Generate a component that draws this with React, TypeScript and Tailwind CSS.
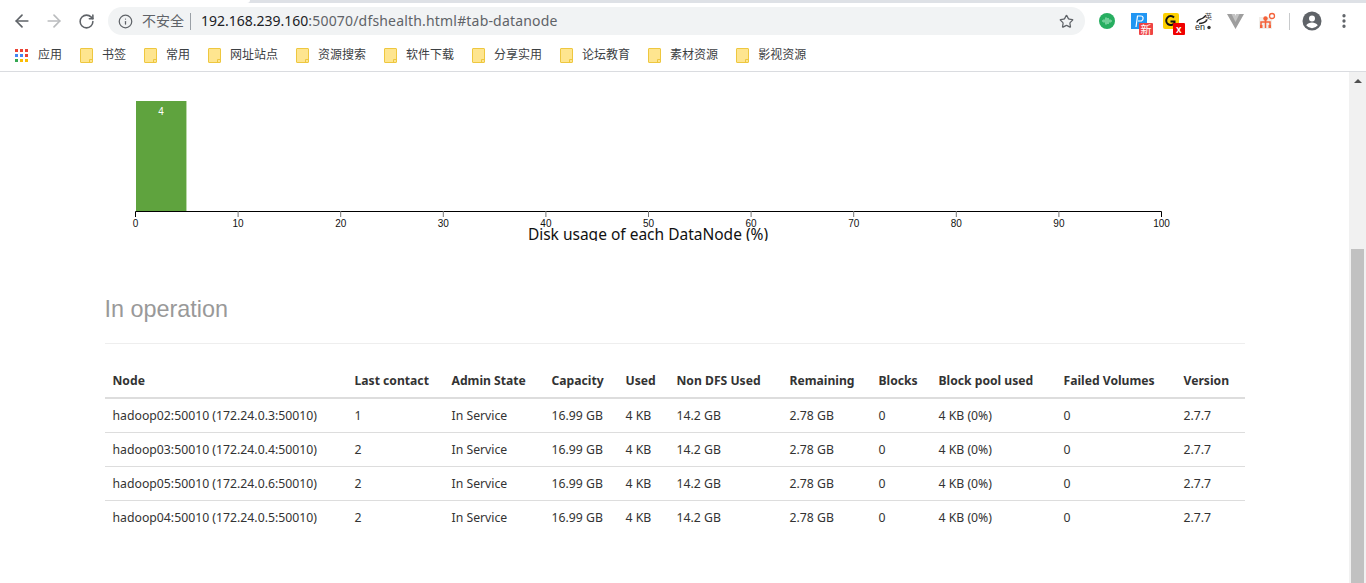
import React from "react";
import { ArrowLeft, ArrowRight, RotateCw, Info, Star, EllipsisVertical } from "lucide-react";

const bookmarks = ["书签", "常用", "网址站点", "资源搜索", "软件下载", "分享实用", "论坛教育", "素材资源", "影视资源"];

const columns = [
  { label: "Node", w: "w-[242px]" },
  { label: "Last contact", w: "w-[97px]" },
  { label: "Admin State", w: "w-[100px]" },
  { label: "Capacity", w: "w-[74px]" },
  { label: "Used", w: "w-[51px]" },
  { label: "Non DFS Used", w: "w-[113px]" },
  { label: "Remaining", w: "w-[89px]" },
  { label: "Blocks", w: "w-[60px]" },
  { label: "Block pool used", w: "w-[125px]" },
  { label: "Failed Volumes", w: "w-[120px]" },
  { label: "Version", w: "w-[69px]" },
];

const nodes = [
  ["hadoop02:50010 (172.24.0.3:50010)", "1"],
  ["hadoop03:50010 (172.24.0.4:50010)", "2"],
  ["hadoop05:50010 (172.24.0.6:50010)", "2"],
  ["hadoop04:50010 (172.24.0.5:50010)", "2"],
];

function FolderIcon() {
  return (
    <svg width="13" height="15" viewBox="0 0 13 15" className="shrink-0">
      <path d="M1 .5h11a.5.5 0 0 1 .5.5v13a.5.5 0 0 1-.5.5H1a.5.5 0 0 1-.5-.5V1A.5.5 0 0 1 1 .5z" fill="#fee58f" stroke="#eec73f" />
      <path d="M9.5 14.5v-3h3" fill="none" stroke="#eec73f" />
    </svg>
  );
}

function AppsIcon() {
  const colors = ["#ea4335", "#ea4335", "#ea4335", "#4285f4", "#4285f4", "#ea4335", "#34a853", "#fbbc05", "#fbbc05"];
  return (
    <div className="grid grid-cols-[repeat(3,3px)] gap-[2px] w-[13px] shrink-0">
      {colors.map((c, i) => (
        <svg key={i} width="3" height="3">
          <rect width="3" height="3" fill={c} />
        </svg>
      ))}
    </div>
  );
}

function ExtensionIcons() {
  return (
    <svg width="190" height="30" viewBox="1095 6 190 30" className="shrink-0">
      {/* green audio */}
      <circle cx="1107" cy="21" r="8" fill="#27ae60" />
      <path d="M1102 21h1M1104 19.500v3M1106 17.500v7M1108 18v6M1110 19.500v3M1112 21h-1" stroke="#a5e6bf" strokeWidth="1.200" fill="none" />
      {/* blue P */}
      <rect x="1131" y="13" width="16" height="16" fill="#2196f3" />
      <path d="M1136 27l1.500-11h3.500c2.500 0 3 3.500.5 5h-3.500" fill="none" stroke="#fff" strokeWidth="1.200" />
      <rect x="1139" y="23" width="14" height="12" rx="1" fill="#ef4444" />
      <text x="1140.500" y="33.500" fontSize="11" fill="#fff" fontFamily="Noto Sans CJK SC, sans-serif">新</text>
      {/* yellow G */}
      <rect x="1163" y="13" width="16" height="16" rx="2" fill="#fdd000" />
      <path d="M1174 17.500a4.500 4.500 0 1 0 .5 5.500M1170.500 21.500h4v2" fill="none" stroke="#111" strokeWidth="2" />
      <rect x="1173" y="23" width="12" height="12" rx="1" fill="#f00000" />
      <text x="1176" y="33" fontSize="10" fontWeight="700" fill="#fff" fontFamily="Liberation Sans, sans-serif">x</text>
      {/* en translate */}
      <path d="M1197 22.500c0-3 4-3 6-4.500 1.500-1 2-2 3-2.500M1199 23.500c3 0 6-1 8-3.500" fill="none" stroke="#222" strokeWidth="1.400" />
      <text x="1195" y="30" fontSize="9" fill="#222" fontFamily="Liberation Sans, sans-serif">en</text>
      <text x="1205" y="19" fontSize="7" fill="#444" fontFamily="Noto Sans CJK SC, sans-serif">英</text>
      <circle cx="1209" cy="27.500" r="1.700" fill="#333" />
      {/* grey V */}
      <path d="M1227 14h6l2.500 5 2.500-5h6l-8.500 15z" fill="#9e9e9e" />
      <path d="M1231.500 14h3.500l.5 2 .5-2h3.500l-4 8z" fill="#c4c4c4" />
      {/* orange org */}
      <rect x="1259" y="17" width="13" height="12" fill="#f1eeea" />
      <circle cx="1265.500" cy="18.500" r="2.200" fill="#f4623a" />
      <path d="M1261 25v-3h9v3M1265.500 20v8" stroke="#f4623a" strokeWidth="1.500" fill="none" />
      <rect x="1260" y="25" width="2.500" height="3" fill="#f4623a" />
      <rect x="1268.500" y="25" width="2.500" height="3" fill="#f4623a" />
      <circle cx="1272" cy="16" r="2.500" fill="#fff" stroke="#f4623a" strokeWidth="1.300" />
    </svg>
  );
}

function ProfileIcon() {
  return (
    <svg width="20" height="20" viewBox="0 0 20 20" className="shrink-0">
      <circle cx="10" cy="10" r="9.500" fill="#5f6368" />
      <circle cx="10" cy="7.500" r="3" fill="#fff" />
      <path d="M4.200 14.300c1.300-2 3.700-2.800 5.800-2.800s4.500.8 5.800 2.800a7.300 7.300 0 0 1-11.600 0z" fill="#fff" />
    </svg>
  );
}

function DiskChart() {
  const x0 = 30.5;
  const step = 102.6;
  const ticks = Array.from({ length: 11 }, (_, i) => i * 10);
  return (
    <svg width="1140" height="169" viewBox="0 0 1140 169" className="block overflow-hidden" fontFamily="Liberation Sans, Arial, sans-serif">
      <rect x="31" y="29" width="50" height="110" fill="#5fa33e" />
      <rect x="81" y="29" width="1" height="110" fill="#b9d8a8" />
      <text x="56" y="43" textAnchor="middle" fontSize="10" fill="#fff">4</text>
      <path d={`M${x0} 145V139.500H${x0 + step * 10}V145`} fill="none" stroke="#000" />
      {ticks.map((t, i) => (
        <g key={t}>
          {i > 0 && i < 10 && <line x1={x0 + i * step} x2={x0 + i * step} y1="139" y2="145" stroke="#777" />}
          <text x={x0 + i * step} y="155" textAnchor="middle" fontSize="10" fill="#111">{t}</text>
        </g>
      ))}
      <text x="543" y="168" textAnchor="middle" fontSize="15.500" fill="#111" fontFamily="Noto Sans, sans-serif">Disk usage of each DataNode (%)</text>
    </svg>
  );
}

export default function App() {
  return (
    <div className="h-[583px] w-[1366px] overflow-hidden flex flex-col bg-white font-['Noto_Sans','Noto_Sans_CJK_SC',sans-serif]">
      {/* Browser chrome */}
      <header className="shrink-0">
        <div className="h-[3px] bg-[#dee1e6]">
          <div className="h-[3px] w-[250px] bg-white rounded-br-md" />
        </div>
        <div className="h-[36px] flex items-center pl-[12px] pr-[12px]">
          <ArrowLeft size={20} color="#5f6368" strokeWidth={2} className="shrink-0" />
          <ArrowRight size={20} color="#babcbe" strokeWidth={2} className="shrink-0 ml-[12px]" />
          <RotateCw size={17} color="#5f6368" strokeWidth={2.2} className="shrink-0 ml-[14px]" />
          <div className="ml-[13px] h-[28px] w-[977px] rounded-full bg-[#f1f3f4] flex items-center pl-[10px] pr-[11px] shrink-0">
            <Info size={15} color="#5f6368" strokeWidth={2} className="shrink-0" />
            <span className="ml-[9px] text-[14px] leading-none text-[#5f6368]">不安全</span>
            <span className="ml-[6px] h-[17px] w-px bg-[#9aa0a6]" />
            <span className="ml-[10px] text-[14px] leading-none text-[#5f6368]">
              <span className="text-[#202124]">192.168.239.160</span>
              <span className="tracking-[0.18px]">:50070/dfshealth.html#tab-datanode</span>
            </span>
            <Star size={15} color="#5f6368" strokeWidth={2} className="ml-auto shrink-0" />
          </div>
          <div className="ml-[10px] shrink-0"><ExtensionIcons /></div>
          <span className="h-[17px] w-px bg-[#c8cacc] shrink-0 ml-[4px]" />
          <div className="ml-[12px]"><ProfileIcon /></div>
          <EllipsisVertical size={18} color="#5f6368" strokeWidth={2.4} className="shrink-0 ml-[13px]" />
        </div>
        <div className="h-[32px] flex items-center pl-[15px]">
          <AppsIcon />
          <span className="ml-[10px] w-[42px] text-[12px] leading-none text-[#3c4043] shrink-0">应用</span>
          {bookmarks.map((b) => (
            <div key={b} className="flex items-center mr-[18px] shrink-0">
              <FolderIcon />
              <span className="ml-[9px] text-[12px] leading-none text-[#3c4043]">{b}</span>
            </div>
          ))}
        </div>
        <div className="h-[1px] bg-[#dadce0]" />
      </header>

      {/* Page */}
      <div className="flex-1 flex min-h-0">
        <main className="flex-1 min-w-0 overflow-hidden">
          <div className="w-[1170px] mx-auto px-[15px]">
            <DiskChart />
            <h3 className="mt-[55px] text-[23.4px] leading-[26px] text-[#999] font-['Liberation_Sans',sans-serif] font-normal">In operation</h3>
            <div className="mt-[21px] h-px bg-[#eee]" />
            <table className="mt-[20px] w-[1140px] table-fixed border-collapse text-[12.25px] text-[#333]">
              <thead>
                <tr className="h-[34px] border-b-2 border-[#ddd]">
                  {columns.map((c) => (
                    <th key={c.label} className={`${c.w} px-[8px] pt-[1px] text-left font-bold text-[12.15px] whitespace-nowrap`}>{c.label}</th>
                  ))}
                </tr>
              </thead>
              <tbody className="[&_td]:px-[8px] [&_td]:pt-[2px] [&_td]:whitespace-nowrap">
                {nodes.map(([name, contact], i) => (
                  <tr key={name} className={i < nodes.length - 1 ? "h-[34px] border-b border-[#ddd]" : "h-[34px]"}>
                    <td>{name}</td>
                    <td>{contact}</td>
                    <td>In Service</td>
                    <td>16.99 GB</td>
                    <td>4 KB</td>
                    <td>14.2 GB</td>
                    <td>2.78 GB</td>
                    <td>0</td>
                    <td>4 KB (0%)</td>
                    <td>0</td>
                    <td>2.7.7</td>
                  </tr>
                ))}
              </tbody>
            </table>
          </div>
        </main>

        {/* Scrollbar */}
        <div className="w-[17px] shrink-0 bg-[#f1f1f1] flex flex-col items-center">
          <div className="h-[17px] flex items-center justify-center">
            <div className="w-0 h-0 border-x-[4px] border-x-transparent border-b-[4px] border-b-[#505050]" />
          </div>
          <div className="mt-[160px] flex-1 w-[13px] bg-[#c1c1c1]" />
        </div>
      </div>
    </div>
  );
}
